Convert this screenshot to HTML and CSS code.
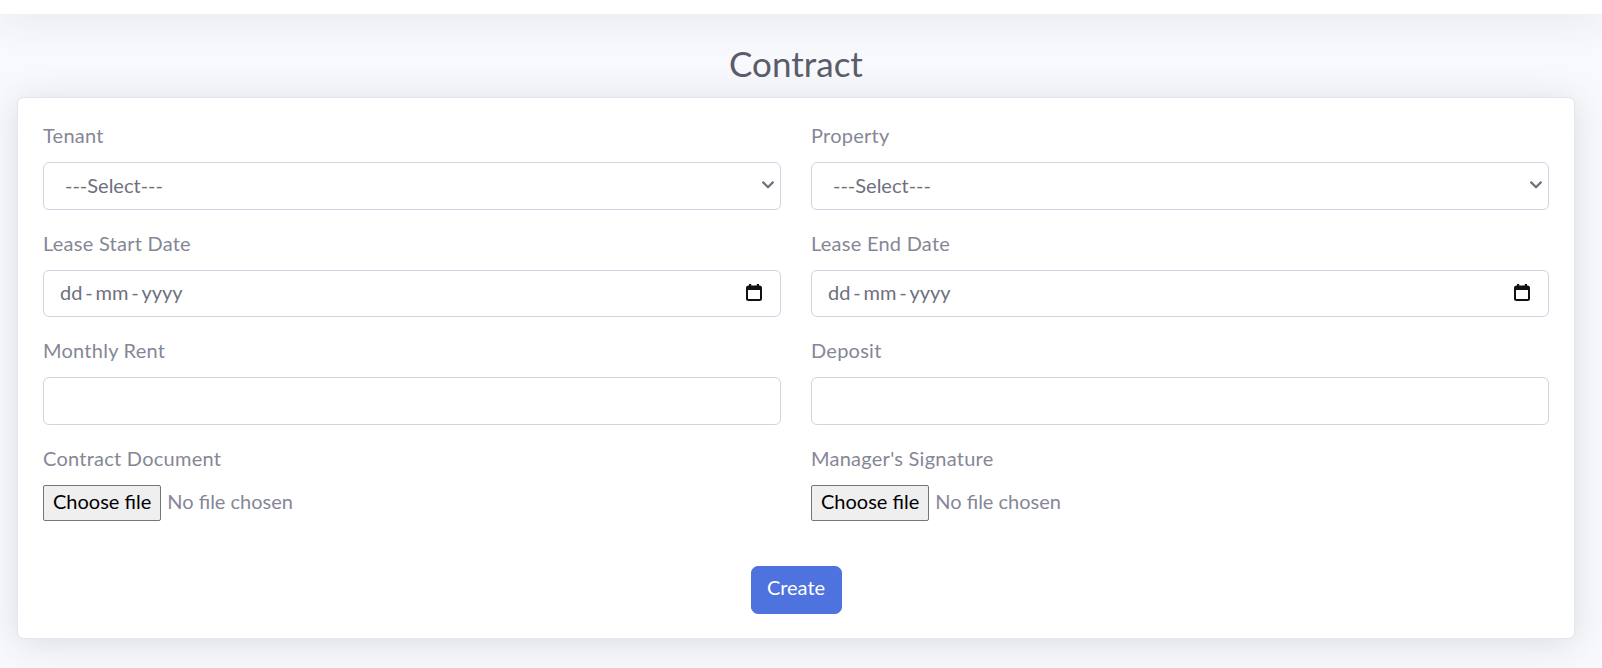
FILE: index.html
```html
<!DOCTYPE html>
<html lang="en">
<head>
<meta charset="utf-8">
<title>Contract</title>
<link rel="stylesheet" href="styles.css">
</head>
<body>
<div class="topbar"></div>
<main class="content">
  <h3 class="page-title">Contract</h3>
  <form class="card">
    <div class="fields">
      <div class="field">
        <label class="field-label">Tenant</label>
        <div class="control select-control">
          <span class="control-text select-text">---Select---</span>
          <svg class="chevron" width="12" height="8" viewBox="0 0 12 8"><path d="M1.2 1.4 L6 6.2 L10.8 1.4" fill="none" stroke="#6e707e" stroke-width="2.2" stroke-linecap="round" stroke-linejoin="round"/></svg>
        </div>
      </div>
      <div class="field">
        <label class="field-label">Property</label>
        <div class="control select-control">
          <span class="control-text select-text">---Select---</span>
          <svg class="chevron" width="12" height="8" viewBox="0 0 12 8"><path d="M1.2 1.4 L6 6.2 L10.8 1.4" fill="none" stroke="#6e707e" stroke-width="2.2" stroke-linecap="round" stroke-linejoin="round"/></svg>
        </div>
      </div>
      <div class="field">
        <label class="field-label">Lease Start Date</label>
        <div class="control date-control">
          <span class="control-text date-text">dd<span class="sep">-</span>mm<span class="sep">-</span>yyyy</span>
          <svg class="calendar" width="16" height="18" viewBox="0 0 16 18"><rect x="1" y="3.5" width="14" height="13.5" rx="1.5" fill="none" stroke="#111" stroke-width="2"/><rect x="1" y="3" width="14" height="4" fill="#111"/><rect x="3" y="1" width="2.2" height="3" fill="#111"/><rect x="10.8" y="1" width="2.2" height="3" fill="#111"/></svg>
        </div>
      </div>
      <div class="field">
        <label class="field-label">Lease End Date</label>
        <div class="control date-control">
          <span class="control-text date-text">dd<span class="sep">-</span>mm<span class="sep">-</span>yyyy</span>
          <svg class="calendar" width="16" height="18" viewBox="0 0 16 18"><rect x="1" y="3.5" width="14" height="13.5" rx="1.5" fill="none" stroke="#111" stroke-width="2"/><rect x="1" y="3" width="14" height="4" fill="#111"/><rect x="3" y="1" width="2.2" height="3" fill="#111"/><rect x="10.8" y="1" width="2.2" height="3" fill="#111"/></svg>
        </div>
      </div>
      <div class="field">
        <label class="field-label">Monthly Rent</label>
        <input class="control" type="text">
      </div>
      <div class="field">
        <label class="field-label">Deposit</label>
        <input class="control" type="text">
      </div>
      <div class="field">
        <label class="field-label">Contract Document</label>
        <div class="file-control">
          <span class="file-btn">Choose file</span>
          <span class="file-name">No file chosen</span>
        </div>
      </div>
      <div class="field">
        <label class="field-label">Manager's Signature</label>
        <div class="file-control">
          <span class="file-btn">Choose file</span>
          <span class="file-name">No file chosen</span>
        </div>
      </div>
    </div>
    <div class="actions">
      <button type="button" class="btn-primary">Create</button>
    </div>
  </form>
</main>
</body>
</html>
```
FILE: styles.css
```css
html, body {
  margin: 0;
  padding: 0;
}
body {
  background: #f8f9fc;
  font-family: Lato, "Open Sans", sans-serif;
  font-size: 20px;
  line-height: 1.5;
  color: #858796;
  height: 668px;
  overflow: hidden;
}
.topbar {
  height: 14px;
  background: #fff;
  box-shadow: 0 4px 35px 0 rgba(58, 59, 69, 0.15);
  position: relative;
  z-index: 1;
}
.content {
  margin: 0 27px 0 17px;
}
.page-title {
  margin: 28px 0 13px;
  font-size: 35px;
  font-weight: 400;
  line-height: 42px;
  text-align: center;
  color: #5a5c69;
}
.card {
  display: block;
  margin: 0;
  background: #fff;
  border: 1px solid #e3e6f0;
  border-radius: 7px;
  box-shadow: 0 4px 35px 0 rgba(58, 59, 69, 0.15);
  padding: 24px 25px 24px;
}
.fields {
  display: grid;
  grid-template-columns: 1fr 1fr;
  column-gap: 30px;
  row-gap: 20px;
}
.field {
  display: flex;
  flex-direction: column;
}
.field-label {
  display: block;
  line-height: 26px;
  margin-bottom: 14px;
  letter-spacing: 0.25px;
  color: #858796;
}
.control {
  box-sizing: border-box;
  height: 47.5px;
  width: 100%;
  border: 1px solid #d1d3e2;
  border-radius: 6px;
  background: #fff;
  padding: 0 15px 2px;
  font: inherit;
  color: #6e707e;
  display: flex;
  align-items: center;
  justify-content: space-between;
  outline: none;
}
.control-text {
  color: #6e707e;
}
.select-text {
  padding-left: 6px;
}
.date-text {
  padding-left: 1px;
}
.date-text .sep {
  margin: 0 2.8px;
}
.chevron {
  margin-right: -9px;
}
.calendar {
  margin-right: 3px;
}
.file-control {
  display: flex;
  align-items: center;
  height: 36px;
}
.file-btn {
  box-sizing: border-box;
  height: 36px;
  padding: 0 9px 4px;
  display: flex;
  align-items: center;
  background: #efefef;
  border: 1px solid #767676;
  border-radius: 2px;
  color: #000;
}
.file-name {
  margin-left: 6px;
  padding-bottom: 4px;
  color: #858796;
}
.actions {
  display: flex;
  justify-content: center;
  margin-top: 45.5px;
}
.btn-primary {
  box-sizing: border-box;
  height: 47.5px;
  padding: 0 15px 5px;
  min-width: 91px;
  border: 1px solid #4e73df;
  border-radius: 7px;
  background: #4e73df;
  color: #fff;
  font: inherit;
  cursor: pointer;
}
```
